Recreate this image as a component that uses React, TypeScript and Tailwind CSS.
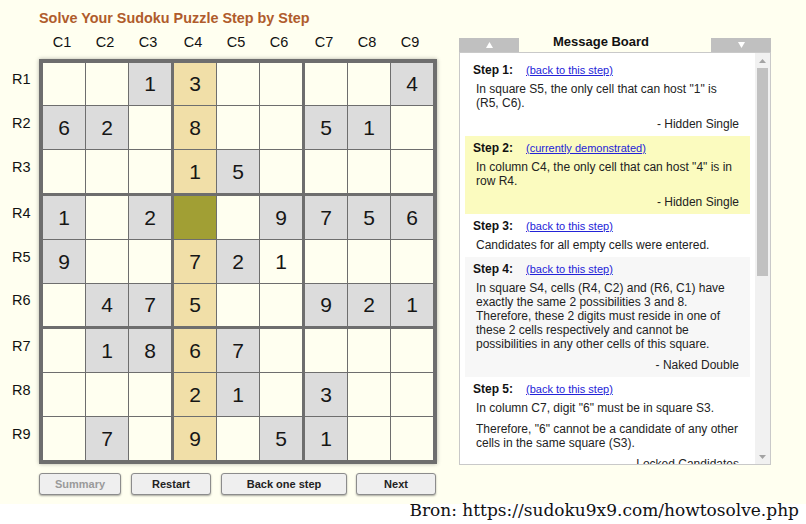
import React from 'react';

// g = given clue (grey cell), plain digit = solved, '' = empty
const board: string[][] = [
  ['', '', 'g1', '3', '', '', '', '', 'g4'],
  ['g6', 'g2', '', '8', '', '', 'g5', 'g1', ''],
  ['', '', '', '1', 'g5', '', '', '', ''],
  ['g1', '', 'g2', '', '', 'g9', 'g7', 'g5', 'g6'],
  ['g9', '', '', '7', 'g2', '1', '', '', ''],
  ['', 'g4', 'g7', '5', '', '', 'g9', 'g2', 'g1'],
  ['', 'g1', 'g8', '6', 'g7', '', '', '', ''],
  ['', '', '', '2', 'g1', '', 'g3', '', ''],
  ['', 'g7', '', '9', '', 'g5', 'g1', '', ''],
];

const rowHeights = ['h-[42px]', 'h-[43px]', 'h-[43px]', 'h-[43px]', 'h-[43px]', 'h-[42px]', 'h-[43px]', 'h-[43px]', 'h-[43px]'];
const cols = ['C1', 'C2', 'C3', 'C4', 'C5', 'C6', 'C7', 'C8', 'C9'];

function Cell({ value, row, col }: { value: string; row: number; col: number }) {
  const given = value.startsWith('g');
  const digit = given ? value.slice(1) : value;
  let bg = given ? 'bg-[#dcdcdc]' : 'bg-[#fffff0]';
  if (col === 3) bg = row === 3 ? 'bg-[#a19f34]' : 'bg-[#f1dfa8]';
  return (
    <div
      className={`w-[42px] flex items-center justify-center text-[21px] text-[#161616] ${bg} ${
        col === 2 || col === 5 ? 'mr-[2px]' : ''
      }`}
    >
      {digit}
    </div>
  );
}

function Step({
  n,
  link,
  bg,
  children,
  sig,
}: {
  n: number;
  link: string;
  bg: string;
  children: React.ReactNode;
  sig?: string;
}) {
  return (
    <div className={`px-[8px] pt-[5px] pb-[5px] ${bg}`}>
      <div className="flex items-center h-[14px] leading-[14px]">
        <span className="w-[53px] text-[12px] font-bold text-[#111]">Step {n}:</span>
        <a className="text-[11px] text-[#2323d8] underline">{link}</a>
      </div>
      {children}
      {sig && <p className="mt-[7px] px-[3px] text-right text-[12px] leading-[14px] text-[#222]">{sig}</p>}
    </div>
  );
}

function Body({ children, first = true }: { children: React.ReactNode; first?: boolean }) {
  return (
    <p className={`${first ? 'mt-[5px]' : 'mt-[7px]'} px-[3px] text-[12px] leading-[14px] text-[#222] whitespace-nowrap`}>
      {children}
    </p>
  );
}

function Button({ label, className, disabled }: { label: string; className: string; disabled?: boolean }) {
  return (
    <button
      className={`${className} h-[22px] rounded-[3px] border border-[#8c8c8c] bg-[#efefef] text-[11px] font-bold shadow-[0_1px_2px_rgba(0,0,0,0.35)] ${
        disabled ? 'text-[#9a9a9a]' : 'text-[#222]'
      }`}
    >
      {label}
    </button>
  );
}

export default function App() {
  return (
    <div className="w-[806px] h-[524px] bg-white overflow-hidden font-['Liberation_Sans',Arial,sans-serif]">
      <div className="h-[504px] bg-[#fffff0] flex">
        {/* Puzzle side */}
        <div className="w-[459px] pl-[12px] pt-[9px] flex flex-col">
          <h1 className="ml-[27px] text-[14.4px] leading-[18px] font-bold text-[#b05c2c]">
            Solve Your Sudoku Puzzle Step by Step
          </h1>
          <div className="mt-[6px] pl-[31px] flex gap-[1px] text-[14.5px] leading-[18px] text-[#111]">
            {cols.map((c, i) => (
              <div key={c} className={`w-[42px] pr-[4px] text-center ${i === 2 || i === 5 ? 'mr-[2px]' : ''}`}>
                {c}
              </div>
            ))}
          </div>
          <div className="mt-[8px] flex">
            <div className="w-[27px] pt-[4px] flex flex-col gap-[1px] text-[14.5px] text-[#111]">
              {rowHeights.map((h, r) => (
                <div key={r} className={`${h} pb-[8px] flex items-center ${r === 2 || r === 5 ? 'mb-[2px]' : ''}`}>
                  R{r + 1}
                </div>
              ))}
            </div>
            <div className="bg-[#6e6e6e] p-[4px] flex flex-col gap-[1px] shadow-[0_0_4px_rgba(0,0,0,0.3)]">
              {board.map((row, r) => (
                <div key={r} className={`${rowHeights[r]} flex gap-[1px] ${r === 2 || r === 5 ? 'mb-[2px]' : ''}`}>
                  {row.map((v, c) => (
                    <Cell key={c} value={v} row={r} col={c} />
                  ))}
                </div>
              ))}
            </div>
          </div>
          <div className="mt-[9px] ml-[27px] flex items-start">
            <Button label="Summary" className="w-[82px]" disabled />
            <Button label="Restart" className="ml-[10px] w-[80px]" />
            <Button label="Back one step" className="ml-[10px] w-[126px]" />
            <Button label="Next" className="ml-[9px] w-[80px]" />
          </div>
        </div>

        {/* Message board */}
        <div className="w-[312px] pt-[38px]">
          <div className="h-[14px] flex">
            <div className="w-[60px] bg-[#c0c0c0] flex items-center justify-center">
              <svg width="7" height="6" viewBox="0 0 7 6">
                <polygon points="3.5,0 7,6 0,6" fill="#fff" />
              </svg>
            </div>
            <div className="flex-1 pr-[28px] text-center text-[13px] font-bold leading-[14px] -mt-[3px] text-[#111]">
              Message Board
            </div>
            <div className="w-[60px] bg-[#c0c0c0] flex items-center justify-center">
              <svg width="7" height="6" viewBox="0 0 7 6">
                <polygon points="0,0 7,0 3.5,6" fill="#fff" />
              </svg>
            </div>
          </div>
          <div className="h-[413px] border border-[#c9c9c9] bg-white flex">
            <div className="flex-1 overflow-hidden px-[5px] pt-[5px]">
              <Step n={1} link="(back to this step)" bg="bg-white" sig="- Hidden Single">
                <Body>
                  In square S5, the only cell that can host "1" is
                  <br />
                  (R5, C6).
                </Body>
              </Step>
              <Step n={2} link="(currently demonstrated)" bg="bg-[#fbfbbf]" sig="- Hidden Single">
                <Body>
                  In column C4, the only cell that can host "4" is in
                  <br />
                  row R4.
                </Body>
              </Step>
              <Step n={3} link="(back to this step)" bg="bg-white">
                <Body>Candidates for all empty cells were entered.</Body>
              </Step>
              <Step n={4} link="(back to this step)" bg="bg-[#f7f7f7]" sig="- Naked Double">
                <Body>
                  In square S4, cells (R4, C2) and (R6, C1) have
                  <br />
                  exactly the same 2 possibilities 3 and 8.
                  <br />
                  Therefore, these 2 digits must reside in one of
                  <br />
                  these 2 cells respectively and cannot be
                  <br />
                  possibilities in any other cells of this square.
                </Body>
              </Step>
              <Step n={5} link="(back to this step)" bg="bg-white" sig="- Locked Candidates">
                <Body>In column C7, digit "6" must be in square S3.</Body>
                <Body first={false}>
                  Therefore, "6" cannot be a candidate of any other
                  <br />
                  cells in the same square (S3).
                </Body>
              </Step>
            </div>
            {/* scrollbar */}
            <div className="w-[15px] bg-[#f1f1f1] flex flex-col items-center">
              <svg className="mt-[6px]" width="7" height="4" viewBox="0 0 7 4">
                <polygon points="3.5,0 7,4 0,4" fill="#a3a3a3" />
              </svg>
              <div className="mt-[5px] w-[11px] h-[208px] bg-[#c1c1c1]" />
              <div className="flex-1" />
              <svg className="mb-[5px]" width="7" height="4" viewBox="0 0 7 4">
                <polygon points="0,0 7,0 3.5,4" fill="#a3a3a3" />
              </svg>
            </div>
          </div>
        </div>
      </div>
      <div className="-mt-[5px] pr-[7px] text-right text-[17px] leading-[22px] text-[#111] font-['DejaVu_Serif',serif] whitespace-pre">
        {'Bron: https://sudoku9x9.com/howtosolve.php'}
      </div>
    </div>
  );
}
